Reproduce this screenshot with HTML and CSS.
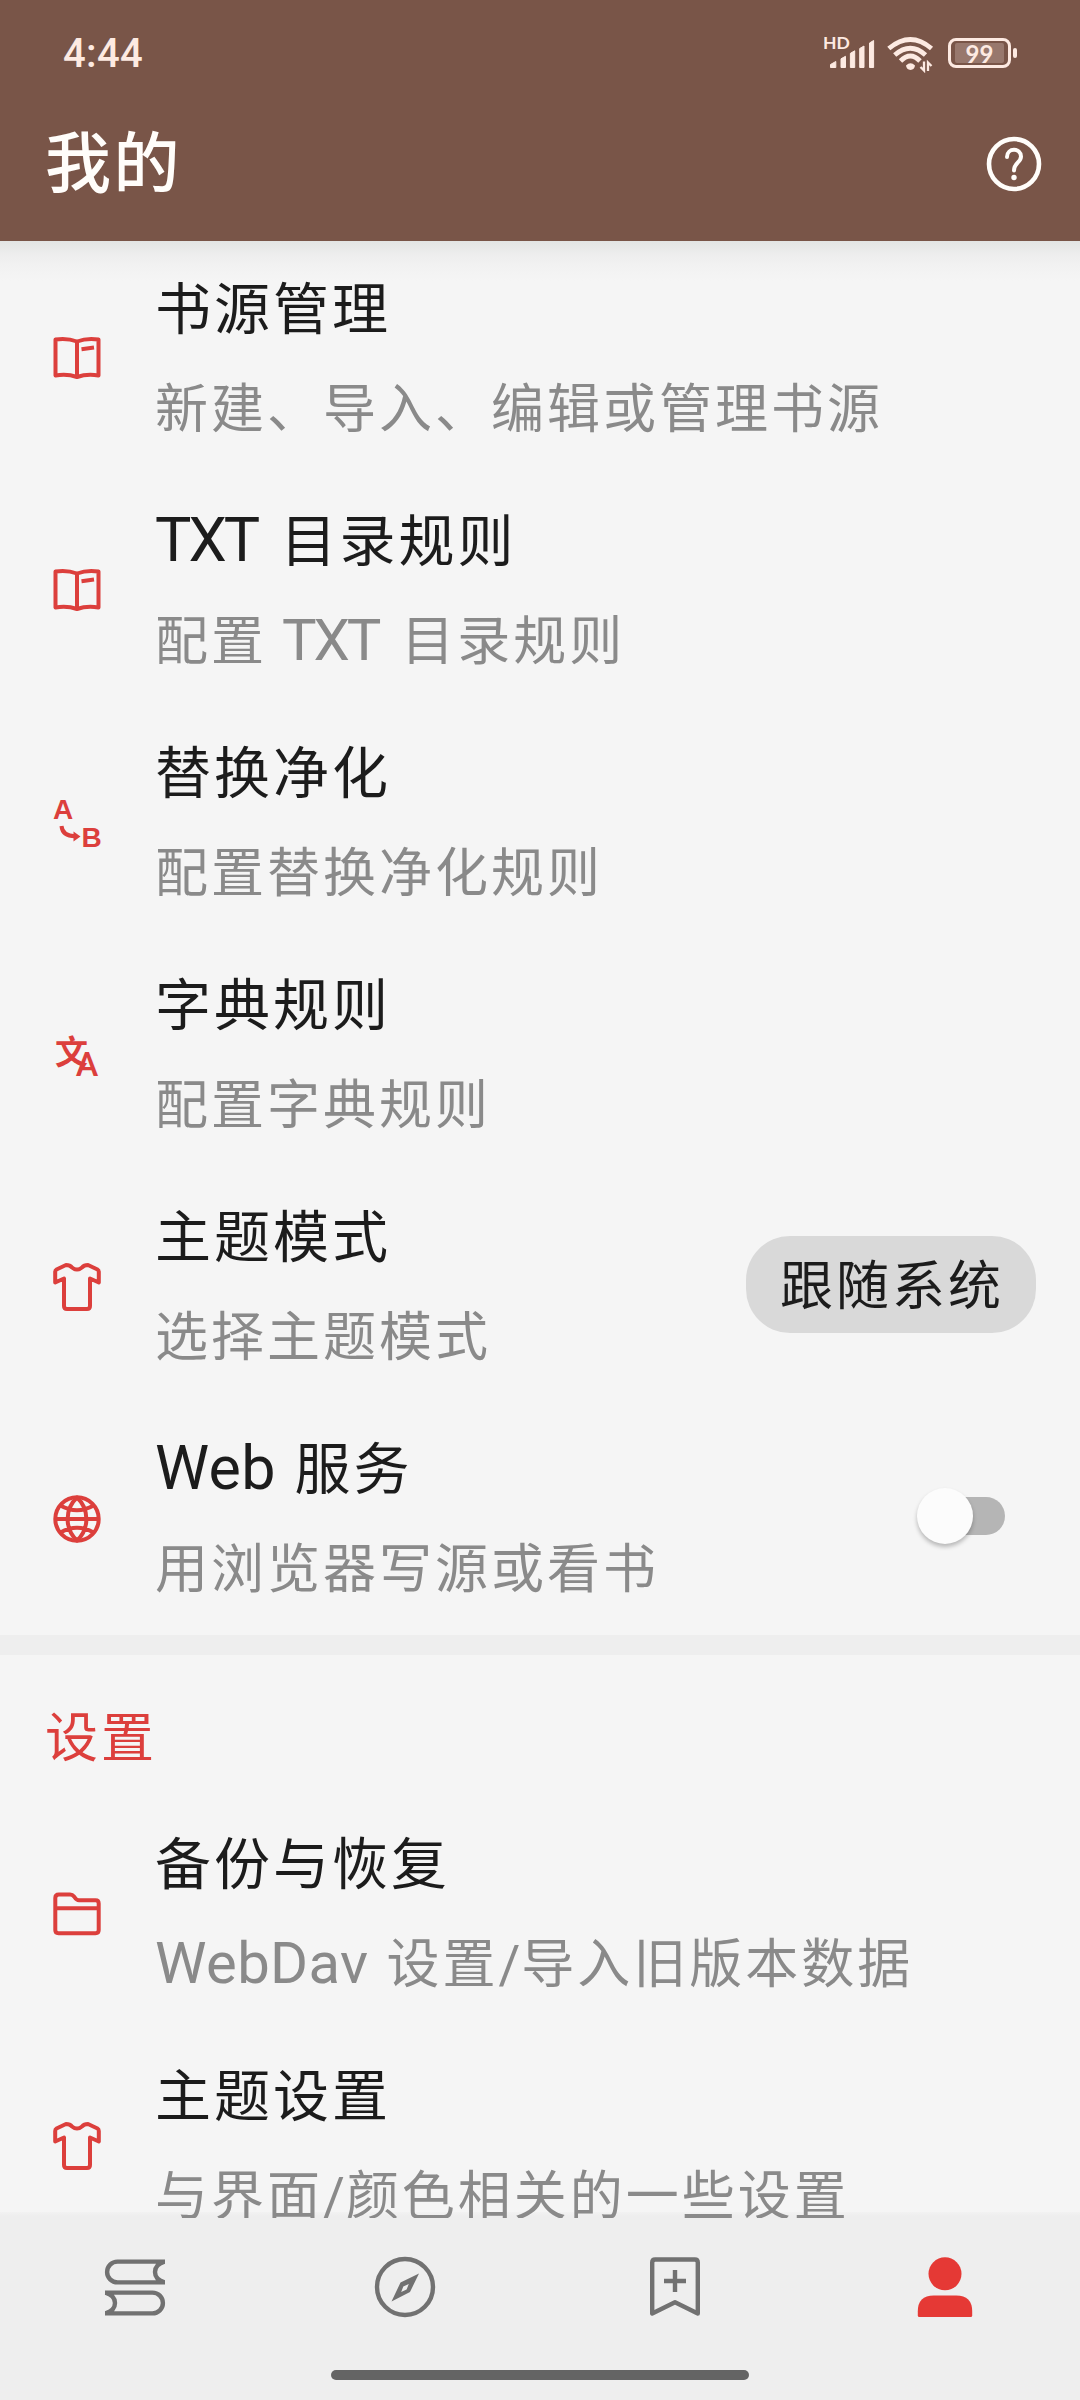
FILE: index.html
```html
<!DOCTYPE html>
<html lang="zh-CN">
<head>
<meta charset="utf-8">
<title>我的</title>
<link rel="stylesheet" href="styles.css">
</head>
<body>
<svg class="defs" width="0" height="0" aria-hidden="true">
  <symbol id="book" viewBox="0 0 48 48"><path d="M2.500 4.500Q14 2.700 24 6.500Q34 2.700 45.500 4.500V40.500Q34 38.500 24 42Q14 38.500 2.500 40.500ZM24 7V42M28.500 14.200L41 12.600"/></symbol>
  <symbol id="tee" viewBox="0 0 48 48"><path d="M13 2L3.500 6.500Q2.200 7.200 2.200 9V19.500L11 15.500V43Q11 46 14 46H34Q37 46 37 43V15.500L45.800 19.500V9Q45.800 7.200 44.500 6.500L35 2Q31 2 29 4.500Q24 8.500 19 4.500Q17 2 13 2Z"/></symbol>
  <symbol id="globe" viewBox="0 0 48 48"><circle cx="24" cy="24" r="21.700"/><path d="M24 2.500C11.500 14 11.500 34 24 45.500C36.500 34 36.500 14 24 2.500ZM2.500 24H45.500M7.500 10.500Q24 20 40.500 10.500M7.500 37.500Q24 28 40.500 37.500"/></symbol>
  <symbol id="folder" viewBox="0 0 48 48"><path d="M2.300 8Q2.300 4.500 5.800 4.500H17Q19.500 4.500 21 6.500Q23.500 10.300 26 10.300H42.500Q45.700 10.300 45.700 13.500V40Q45.700 43.200 42.500 43.200H5.500Q2.300 43.200 2.300 40ZM2.300 18.200H45.700"/></symbol>
</svg>
<div class="screen">
  <header class="appbar">
    <div class="status">
      <span class="clock">4:44</span>
      <div class="indicators">
        <svg class="signal" viewBox="0 0 52 40"><text x="-1" y="16.300" class="hd">HD</text><path d="M6.500 34.500V31.500L11.800 28.500V34.500ZM17 34.500V25.800L21.500 23.300V34.500ZM26.400 34.500V20.300L30.700 17.800V34.500ZM35.700 34.500V15.500L40 13V34.500ZM45.500 34.500V10L49.600 7.500V34.500Z" stroke-width="1" stroke="currentColor" stroke-linejoin="round" fill="currentColor"/></svg>
        <svg class="wifi" viewBox="0 0 50 40" fill="none" stroke="currentColor" stroke-width="4.800"><path d="M2.800 15.500Q24.500-2.500 45.500 15.500M8.700 22Q24.500 8.500 39.500 22"/><path d="M14.500 28Q24.500 18 34 28"/><path d="M20 32.500Q24.500 28 29 32.500Q28.500 36.500 24.500 37Q20.500 36.500 20 32.500Z" fill="currentColor" stroke="none"/><path d="M38 28.500V37.500L34.500 34M42 38V29.500L45.500 33" stroke-width="2.300"/></svg>
        <span class="battery"><span class="charge">99</span></span>
      </div>
    </div>
    <div class="toolbar">
      <h1 class="heading">我的</h1>
      <svg class="help" viewBox="0 0 56 56" fill="none" stroke="currentColor" stroke-width="4.600" stroke-linecap="round"><circle cx="28" cy="28" r="25"/><path d="M21 21C21 11.500 35 11.500 35 20.500C35 26.500 28 26.500 28 34.500" stroke-width="4"/><circle cx="28" cy="41.500" r="2.700" fill="currentColor" stroke="none"/></svg>
    </div>
  </header>

  <main class="list">
    <section class="group">
      <div class="row"><svg class="icon"><use href="#book"/></svg><div class="copy"><div class="title">书源管理</div><div class="summary">新建、导入、编辑或管理书源</div></div></div>
      <div class="row"><svg class="icon"><use href="#book"/></svg><div class="copy"><div class="title"><span class="latin caps">TXT</span> 目录规则</div><div class="summary">配置 <span class="latin caps">TXT</span> 目录规则</div></div></div>
      <div class="row"><svg class="icon" viewBox="0 0 48 48"><text x="0" y="20" class="ab">A</text><text x="28.500" y="47.500" class="ab">B</text><path d="M8.500 27Q9.500 37.200 22 37.200"/><path d="M20.500 32.500L27.500 37.500L20.500 42.500Z" class="solid"/></svg><div class="copy"><div class="title">替换净化</div><div class="summary">配置替换净化规则</div></div></div>
      <div class="row"><svg class="icon" viewBox="0 0 48 48"><text x="2" y="32.500" class="wen">文</text><text x="22.800" y="45" class="aa">A</text></svg><div class="copy"><div class="title">字典规则</div><div class="summary">配置字典规则</div></div></div>
      <div class="row"><svg class="icon"><use href="#tee"/></svg><div class="copy"><div class="title">主题模式</div><div class="summary">选择主题模式</div></div><span class="chip">跟随系统</span></div>
      <div class="row"><svg class="icon"><use href="#globe"/></svg><div class="copy"><div class="title"><span class="latin">Web</span> 服务</div><div class="summary">用浏览器写源或看书</div></div><span class="switch"><span class="thumb"></span></span></div>
    </section>
    <section class="group settings">
      <h2 class="category">设置</h2>
      <div class="row"><svg class="icon"><use href="#folder"/></svg><div class="copy"><div class="title">备份与恢复</div><div class="summary"><span class="latin">WebDav</span> 设置<span class="slash">/</span>导入旧版本数据</div></div></div>
      <div class="row"><svg class="icon"><use href="#tee"/></svg><div class="copy"><div class="title">主题设置</div><div class="summary">与界面<span class="slash">/</span>颜色相关的一些设置</div></div></div>
    </section>
  </main>

  <nav class="tabs">
    <div class="tab-row">
      <a class="tab"><svg viewBox="0 0 60 60"><g id="volume"><path d="M60 4.600H12.500a10.400 10.400 0 0 0 0 20.800H60M59.500 4.600Q50 7.500 50 15T59.500 25.400"/></g><use href="#volume" transform="rotate(180 30 30.500)"/></svg></a>
      <a class="tab"><svg viewBox="0 0 60 60"><circle cx="30" cy="30" r="28"/><path class="solid" fill-rule="evenodd" d="M44 16.500L25.500 25.500L16.500 44.500L35 35ZM33.800 27L28.300 29.500L26.200 35L31.600 32.500Z"/></svg></a>
      <a class="tab"><svg viewBox="0 0 60 60"><path d="M7.200 56.500V5.500Q7.200 2.500 10.200 2.500H49.800Q52.800 2.500 52.800 5.500V56.500L30 45.300ZM30 13V35M19 24H41"/></svg></a>
      <a class="tab active"><svg viewBox="0 0 60 60"><circle class="solid" cx="30" cy="16.800" r="16.500"/><path class="solid" d="M2.800 58.500V54.500Q2.800 38.500 18.800 38.500H41.200Q57.200 38.500 57.200 54.500V58.500Q57.200 60 55.700 60H4.300Q2.800 60 2.800 58.500Z"/></svg></a>
    </div>
    <div class="gesture"></div>
  </nav>
</div>
</body>
</html>
```
FILE: styles.css
```css
* { box-sizing: border-box; }
body {
  margin: 0;
  background: #f5f5f5;
  font-family: "Noto Sans CJK SC", sans-serif;
}
.defs { display: block; }
.screen {
  display: flex;
  flex-direction: column;
  width: 1080px;
  height: 2400px;
  overflow: hidden;
}

/* App bar */
.appbar {
  flex: none;
  height: 241px;
  background: #795548;
  color: #fffdfa;
}
.status {
  display: flex;
  justify-content: space-between;
  height: 86px;
  padding: 0 63px 0 63px;
  color: #fdeae2;
}
.clock {
  padding-top: 4px;
  font: 500 40px/100px Roboto, sans-serif;
  letter-spacing: .3px;
}
.indicators { display: flex; padding-top: 33px; }
.signal { width: 52px; height: 40px; }
.hd { font: 700 17.500px Lato, sans-serif; fill: currentColor; }
.wifi { width: 50px; height: 40px; margin-left: 10px; }
.battery {
  position: relative;
  width: 63px;
  height: 30px;
  margin: 5px 6px 0 12px;
  padding: 2px 4px;
  border: 3px solid currentColor;
  border-radius: 8px;
}
.battery::after {
  content: "";
  position: absolute;
  right: -9px;
  top: 7px;
  width: 4px;
  height: 10px;
  border-radius: 2px;
  background: currentColor;
}
.charge {
  display: block;
  height: 20px;
  border-radius: 2px;
  background: #98786d;
  font: 700 24px/21px Lato, sans-serif;
  text-align: center;
}
.toolbar {
  display: flex;
  align-items: center;
  justify-content: space-between;
  height: 155px;
  padding: 0 38px 0 45px;
}
.heading {
  margin: 0;
  padding-bottom: 11px;
  font-size: 66px;
  font-weight: 500;
  line-height: 140px;
  letter-spacing: 2.500px;
}
.help { width: 56px; height: 56px; }

/* Preference list */
.list {
  flex: 1;
  min-height: 0;
  overflow: hidden;
  padding-top: 2px;
  background:
    linear-gradient(#f2f2f2, #eeeeee 4px) bottom / 100% 6px no-repeat,
    linear-gradient(#e3e5e4, #eeeeee 14px, #f2f2f2 26px, #f5f5f5 40px);
}
.row {
  display: flex;
  align-items: center;
  height: 232px;
  padding: 0 44px 0 53px;
}
.icon {
  flex: none;
  width: 48px;
  height: 48px;
  margin-right: 54px;
  overflow: visible;
  fill: none;
  stroke: #dc3f3c;
  stroke-width: 4;
  stroke-linejoin: round;
}
.icon text, .icon .solid { fill: #dc3f3c; stroke: none; }
.ab { font: 700 28px "Liberation Sans", sans-serif; }
.wen { font: 700 33px "Noto Sans CJK SC", sans-serif; }
.aa { font: 500 34px Roboto, sans-serif; }
.copy { flex: 1; padding-bottom: 9px; white-space: nowrap; }
.title {
  font-size: 56px;
  line-height: 100px;
  letter-spacing: 3px;
  color: #1c1c1c;
}
.summary {
  font-size: 53px;
  line-height: 100px;
  letter-spacing: 3px;
  color: #8a8a8a;
}
.latin {
  margin-right: 3px;
  font-family: Roboto, sans-serif;
  font-size: 61px;
  line-height: 0;
  letter-spacing: .4px;
}
.summary .latin { font-size: 58px; }
.latin.caps { margin-right: 8px; letter-spacing: -3px; }
.slash {
  font-family: Roboto, sans-serif;
  line-height: 0;
  letter-spacing: 1px;
}
.chip {
  height: 97px;
  margin-top: -5px;
  padding: 0 32px 0 34px;
  border-radius: 44px;
  background: #d9d9d9;
  color: #1c1c1c;
  font-size: 53px;
  line-height: 92px;
  letter-spacing: 3px;
}
.switch {
  display: flex;
  align-items: center;
  width: 80px;
  height: 38px;
  margin: -6px 31px 0 0;
  border-radius: 19px;
  background: #b5b5b5;
}
.thumb {
  flex: none;
  width: 56px;
  height: 56px;
  margin-left: -8px;
  border-radius: 50%;
  background: #fcfcfc;
  box-shadow: 0 3px 4px rgba(0, 0, 0, .25);
}
.settings { border-top: 20px solid #eeeeee; }
.category {
  margin: 0;
  padding-left: 45px;
  font-size: 53px;
  font-weight: 400;
  line-height: 158px;
  height: 143px;
  letter-spacing: 3px;
  color: #dc3f3c;
}

/* Bottom navigation */
.tabs { flex: none; height: 182px; background: #eeeeee; }
.tab-row { display: flex; padding-top: 39px; }
.tab { display: flex; flex: 1; justify-content: center; }
.tab svg {
  width: 60px;
  height: 60px;
  overflow: visible;
  fill: none;
  stroke: #717171;
  stroke-width: 4.400;
  stroke-linejoin: round;
}
.tab .solid { fill: #717171; stroke: none; }
.active .solid { fill: #e53935; }
.gesture {
  width: 418px;
  height: 10px;
  margin: 53px auto 0;
  border-radius: 5px;
  background: #646464;
}
```
